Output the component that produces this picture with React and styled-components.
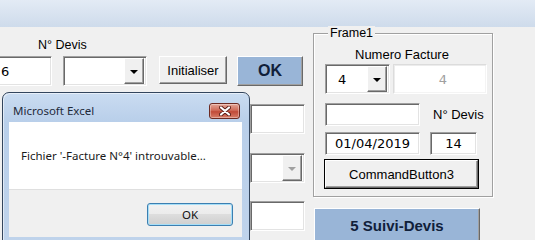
import styled, { createGlobalStyle } from "styled-components";

const GlobalStyle = createGlobalStyle`
  html, body {
    margin: 0;
    padding: 0;
    background: #f0f0f0;
    overflow: hidden;
  }
  body {
    width: 535px;
    height: 240px;
    font-family: "Liberation Sans", Arial, sans-serif;
    color: #000;
  }
`;

/* ── WINDOW ── */
const Screen = styled.div`
  position: relative;
  width: 535px;
  height: 240px;
  overflow: hidden;
  background: #f0f0f0;
`;

const TopStrip = styled.div`
  height: 27px;
  background: linear-gradient(#e3ebf5, #cedbeb);
`;

const Form = styled.div`
  display: flex;
  align-items: flex-start;
`;

const LeftPane = styled.div`
  width: 315px;
  margin-left: -10px;
  padding-top: 11px;
  display: flex;
  flex-direction: column;
`;

const RightPane = styled.div`
  margin-left: 8px;
  margin-top: 6px;
  display: flex;
  flex-direction: column;
  width: 180px;
`;

const Label = styled.div`
  font-size: ${(p) => p.$size || 13}px;
  line-height: 15px;
  padding-left: ${(p) => p.$indent || 0}px;
  margin-left: ${(p) => p.$offset || 0}px;
  white-space: nowrap;
`;

const Row = styled.div`
  display: flex;
  align-items: ${(p) => p.$align || "flex-start"};
  margin-top: ${(p) => p.$top || 0}px;
  gap: ${(p) => p.$gap || 0}px;
`;

const Column = styled.div`
  display: flex;
  flex-direction: column;
  gap: 18px;
  margin-left: ${(p) => p.$left}px;
  margin-top: ${(p) => p.$top}px;
`;

/* ── CONTROLS ── */
const TextBox = styled.div`
  box-sizing: border-box;
  width: ${(p) => p.$w}px;
  height: ${(p) => p.$h || 30}px;
  margin-left: ${(p) => p.$ml || 0}px;
  margin-top: ${(p) => p.$mt || 0}px;
  background: #fff;
  border-top: 1px solid ${(p) => (p.$disabled ? "#dcdcdc" : "#a0a0a0")};
  border-left: 1px solid ${(p) => (p.$disabled ? "#dcdcdc" : "#a0a0a0")};
  border-right: 1px solid #fff;
  border-bottom: 1px solid #fff;
  box-shadow: ${(p) =>
    p.$disabled
      ? "inset 1px 1px 0 #ececec, inset -1px -1px 0 #f4f4f4"
      : "inset 1px 1px 0 #696969, inset -1px -1px 0 #e3e3e3"};
  display: flex;
  align-items: center;
  justify-content: ${(p) => (p.$center ? "center" : "flex-start")};
  padding-left: ${(p) => p.$pl || 0}px;
  font-family: "DejaVu Sans", Verdana, sans-serif;
  font-size: 13px;
  color: ${(p) => (p.$disabled ? "#a0a0a0" : "#000")};
`;

const Combo = styled(TextBox)`
  justify-content: space-between;
  padding-right: 2px;
`;

const DropButton = styled.div`
  box-sizing: border-box;
  width: 20px;
  height: 26px;
  background: #f0f0f0;
  border-top: 1px solid #fff;
  border-left: 1px solid #fff;
  border-right: 1px solid #696969;
  border-bottom: 1px solid #696969;
  box-shadow: inset -1px -1px 0 #a0a0a0;
  display: flex;
  align-items: center;
  justify-content: center;
  padding-top: 2px;
`;

const Arrow = ({ color = "#000" }) => (
  <svg width="8" height="4" viewBox="0 0 8 4">
    <polygon points="0,0 8,0 4,4" fill={color} />
  </svg>
);

const Button = styled.div`
  box-sizing: border-box;
  width: ${(p) => p.$w}px;
  height: ${(p) => p.$h || 28}px;
  margin-left: ${(p) => p.$ml || 0}px;
  margin-top: ${(p) => p.$mt || 0}px;
  background: ${(p) => (p.$blue ? "#99b5d7" : "#f0f0f0")};
  border-top: 1px solid #fff;
  border-left: 1px solid #fff;
  border-right: 1px solid #696969;
  border-bottom: 1px solid #696969;
  box-shadow: inset -1px -1px 0 #a0a0a0;
  outline: ${(p) => (p.$focus ? "1px solid #000" : "none")};
  display: flex;
  align-items: center;
  justify-content: center;
  font-size: ${(p) => (p.$blue ? p.$fs || 16 : 13)}px;
  font-weight: ${(p) => (p.$blue ? 700 : 400)};
  color: ${(p) => (p.$blue ? "#10203a" : "#000")};
  white-space: nowrap;
`;

/* ── FRAME ── */
const Frame = styled.div`
  position: relative;
  box-sizing: border-box;
  width: 180px;
  height: 164px;
  border: 1px solid #a0a0a0;
  box-shadow: inset 1px 1px 0 #fff, 1px 1px 0 #fff;
  padding: 13px 0 0 11px;
`;

const Legend = styled.span`
  position: absolute;
  top: -8px;
  left: 14px;
  padding: 0 2px;
  background: #f0f0f0;
  font-size: 12.5px;
  line-height: 15px;
`;

/* ── MESSAGE BOX ── */
const MsgBox = styled.div`
  position: absolute;
  left: 2px;
  top: 92px;
  width: 248px;
  height: 152px;
  box-sizing: border-box;
  border: 1px solid #33455d;
  border-radius: 7px 7px 0 0;
  background: linear-gradient(#cadcf1, #b9cfea 28px, #bfd3eb);
  box-shadow: inset 1px 1px 0 rgba(255, 255, 255, 0.55);
  padding: 0 7px 6px 6px;
  display: flex;
  flex-direction: column;
  font-family: "Noto Sans", "Open Sans", sans-serif;
`;

const TitleBar = styled.div`
  height: 29px;
  display: flex;
  align-items: flex-start;
  justify-content: space-between;
`;

const Title = styled.span`
  margin-top: 10px;
  padding-left: 4px;
  font-size: 11.5px;
  line-height: 16px;
  color: #1e2a3a;
`;

const CloseButton = styled.div`
  box-sizing: border-box;
  width: 31px;
  height: 16px;
  margin-top: 10px;
  margin-right: 2px;
  border: 1px solid #6d2a22;
  border-radius: 3px;
  background: linear-gradient(#e4a698, #cf6a58 45%, #c14a38 55%, #d77d68);
  box-shadow: inset 0 0 0 1px rgba(255, 255, 255, 0.35);
  display: flex;
  align-items: center;
  justify-content: center;
`;

const CloseIcon = () => (
  <svg width="12" height="10" viewBox="0 0 12 10">
    <path d="M2 1.5 L10 8.5 M10 1.5 L2 8.5" stroke="#5b1d16" strokeWidth="4" strokeLinecap="round" />
    <path d="M2 1.5 L10 8.5 M10 1.5 L2 8.5" stroke="#fff" strokeWidth="2.2" strokeLinecap="round" />
  </svg>
);

const Message = styled.div`
  height: 67px;
  background: #fff;
  display: flex;
  align-items: center;
  padding-left: 12px;
  font-size: 11.5px;
  color: #1a1a1a;
`;

const Footer = styled.div`
  flex: 1;
  background: #f0f0f0;
  border-top: 1px solid #dfdfdf;
  display: flex;
  justify-content: flex-end;
  padding: 13px 9px 0 0;
`;

const DialogButton = styled.div`
  box-sizing: border-box;
  width: 86px;
  height: 23px;
  border: 1px solid #3c7fb1;
  border-radius: 3px;
  background: linear-gradient(#f2f2f2, #ebebeb 50%, #dddddd 50%, #cfcfcf);
  box-shadow: inset 0 0 0 1px #a6def7;
  display: flex;
  align-items: center;
  justify-content: center;
  font-size: 11.5px;
  color: #111;
`;

const App = () => {
  return (
    <>
      <GlobalStyle />
      <Screen>
        <TopStrip />
        <Form>
          <LeftPane>
            <Label $size={12.5} $indent={48}>
              N° Devis
            </Label>
            <Row $top={3}>
              <TextBox $w={62} $pl={10}>6</TextBox>
              <Combo $w={84} $ml={11}>
                <span />
                <DropButton>
                  <Arrow />
                </DropButton>
              </Combo>
              <Button $w={68} $ml={12}>Initialiser</Button>
              <Button $w={66} $h={30} $ml={10} $blue>
                OK
              </Button>
            </Row>
            <Column $left={260} $top={18}>
              <TextBox $w={55} />
              <Combo $w={55} $mt={1}>
                <span />
                <DropButton>
                  <Arrow color="#a0a0a0" />
                </DropButton>
              </Combo>
              <TextBox $w={55} />
            </Column>
          </LeftPane>

          <RightPane>
            <Frame>
              <Legend>Frame1</Legend>
              <Label $indent={30}>Numero Facture</Label>
              <Row $top={2} $gap={3}>
                <Combo $w={65} $pl={12}>
                  <span>4</span>
                  <DropButton>
                    <Arrow />
                  </DropButton>
                </Combo>
                <TextBox $w={94} $pl={6} $center $disabled>
                  4
                </TextBox>
              </Row>
              <Row $top={9} $align="center">
                <TextBox $w={95} $h={23} />
                <Label $offset={13}>N° Devis</Label>
              </Row>
              <Row $top={6}>
                <TextBox $w={95} $h={23} $center>
                  01/04/2019
                </TextBox>
                <TextBox $w={47} $h={23} $ml={10} $center>
                  14
                </TextBox>
              </Row>
              <Button $w={153} $mt={5} $focus>
                CommandButton3
              </Button>
            </Frame>
            <Button $w={166} $h={34} $ml={1} $mt={11} $blue $fs={15}>
              5 Suivi-Devis
            </Button>
          </RightPane>
        </Form>

        <MsgBox>
          <TitleBar>
            <Title>Microsoft Excel</Title>
            <CloseButton>
              <CloseIcon />
            </CloseButton>
          </TitleBar>
          <Message>Fichier '-Facture N°4' introuvable...</Message>
          <Footer>
            <DialogButton>OK</DialogButton>
          </Footer>
        </MsgBox>
      </Screen>
    </>
  );
};

export default App;
